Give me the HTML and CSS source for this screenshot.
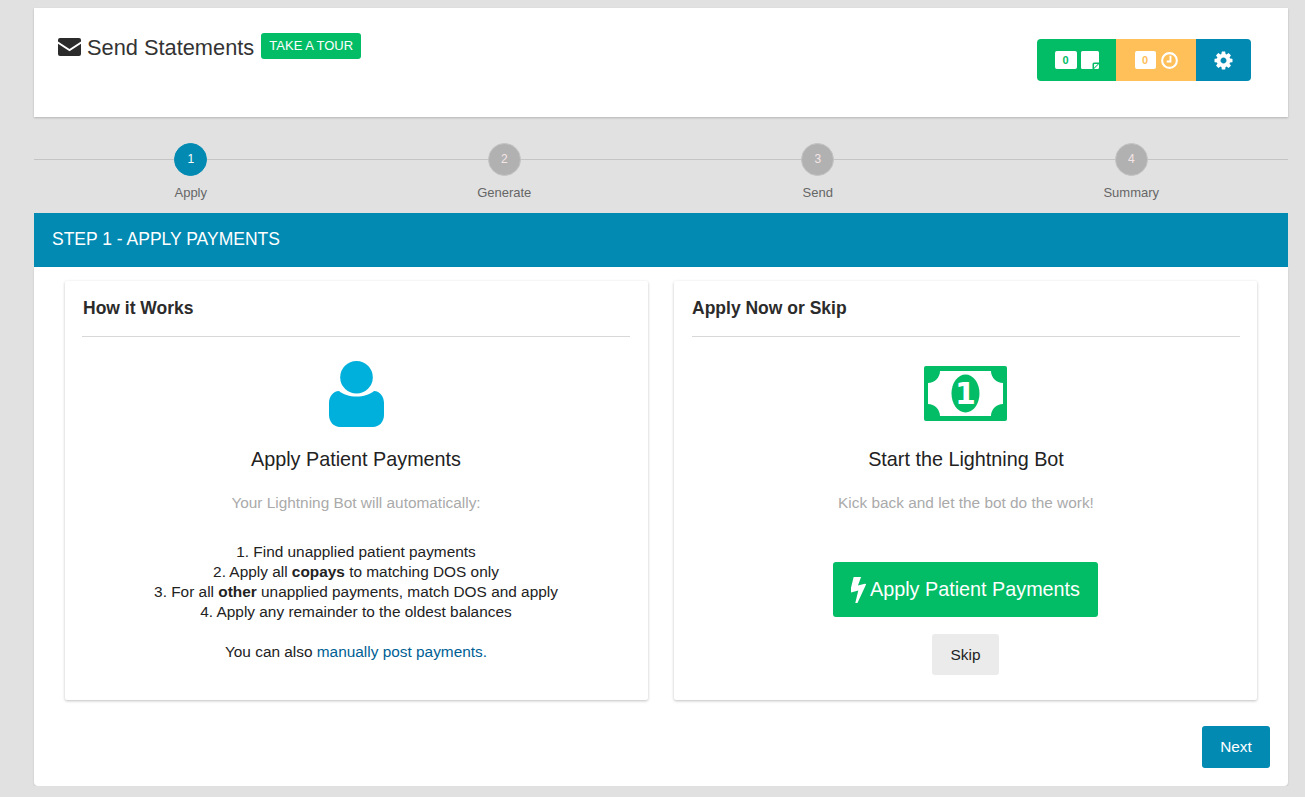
FILE: index.html
```html
<!DOCTYPE html>
<html lang="en">
<head>
    <meta charset="UTF-8">
    <title>Send Statements</title>
    <link rel="stylesheet" href="styles.css">
</head>
<body>

<div class="page">

    <div class="top-card">
        <div class="title-row">
            <svg class="mail-icon" viewBox="0 0 23 18"><path d="M2 0h19a2 2 0 0 1 2 2v1.600l-11.500 7.400L0 3.600V2a2 2 0 0 1 2-2z"/><path d="M0 5.800l11.500 7.400L23 5.800V16a2 2 0 0 1-2 2H2a2 2 0 0 1-2-2z"/></svg>
            <h1>Send Statements</h1>
            <a class="tour-btn">TAKE A TOUR</a>
        </div>
        <div class="actions">
            <div class="action action-green">
                <span class="count count-green">0</span>
                <svg class="note-icon" viewBox="0 0 18 18"><rect width="18" height="18" rx="1.500" fill="#fff"/><path d="M11.500 18v-5a1.500 1.500 0 0 1 1.500-1.500h5v1.500l-5 5z" fill="#02bd66"/><path d="M13 16.800v-3.300a.5.5 0 0 1 .5-.5h3.300z" fill="#fff"/></svg>
            </div>
            <div class="action action-yellow">
                <span class="count count-yellow">0</span>
                <svg class="clock-icon" viewBox="0 0 18 18"><circle cx="9" cy="9" r="7.800" fill="none" stroke="#fff" stroke-width="2.200"/><path d="M10 4v6H6" fill="none" stroke="#fff" stroke-width="2"/></svg>
            </div>
            <div class="action action-blue">
                <svg class="gear-icon" viewBox="0 0 1792 1792"><path fill="#fff" d="M1152 896q0-106-75-181t-181-75-181 75-75 181 75 181 181 75 181-75 75-181zm512-109v222q0 12-8 23t-20 13l-185 28q-19 54-39 91 35 50 107 138 10 12 10 25t-9 23q-27 37-99 108t-94 71q-12 0-26-9l-138-108q-44 23-91 38-16 136-29 186-7 28-36 28h-222q-14 0-24.500-8.500t-11.500-21.500l-28-184q-49-16-90-37l-141 107q-10 9-25 9-14 0-25-11-126-114-165-168-7-10-7-23 0-12 8-23 15-21 51-66.500t54-70.500q-27-50-41-99l-183-27q-13-2-21-12.500t-8-23.500v-222q0-12 8-23t19-13l186-28q14-46 39-92-40-57-107-138-10-12-10-24 0-10 9-23 26-36 98.500-107.500t94.500-71.500q13 0 26 10l138 107q44-23 91-38 16-136 29-186 7-28 36-28h222q14 0 24.500 8.500t11.500 21.500l28 184q49 16 90 37l142-107q9-9 24-9 13 0 25 10 129 119 165 170 7 8 7 22 0 12-8 23-15 21-51 66.500t-54 70.500q26 50 41 98l183 28q13 2 21 12.500t8 23.500z"/></svg>
            </div>
        </div>
    </div>

    <div class="steps">
        <div class="step step-active"><span class="step-num">1</span><span class="step-label">Apply</span></div>
        <div class="step"><span class="step-num">2</span><span class="step-label">Generate</span></div>
        <div class="step"><span class="step-num">3</span><span class="step-label">Send</span></div>
        <div class="step"><span class="step-num">4</span><span class="step-label">Summary</span></div>
    </div>

    <div class="panel">
        <div class="panel-head">STEP 1 - APPLY PAYMENTS</div>
        <div class="panel-body">
            <div class="cards">
                <div class="card">
                    <h3>How it Works</h3>
                    <div class="card-main">
                        <svg class="person-icon" viewBox="0 0 55 66"><circle cx="27.500" cy="16.300" r="16.300"/><path d="M10 30C14 33.500 20.500 35.500 27.500 35.500S41 33.500 45 30C51 30 55 36 55 42V54C55 61 50 66 44 66H11C5 66 0 61 0 54V42C0 36 4 30 10 30z"/></svg>
                        <h4>Apply Patient Payments</h4>
                        <p class="muted">Your Lightning Bot will automatically:</p>
                        <ol class="how-list">
                            <li>1. Find unapplied patient payments</li>
                            <li>2. Apply all <b>copays</b> to matching DOS only</li>
                            <li>3. For all <b>other</b> unapplied payments, match DOS and apply</li>
                            <li>4. Apply any remainder to the oldest balances</li>
                        </ol>
                        <p class="also">You can also <a class="link">manually post payments.</a></p>
                    </div>
                </div>
                <div class="card">
                    <h3>Apply Now or Skip</h3>
                    <div class="card-main">
                        <svg class="bill-icon" viewBox="0 0 83 55"><rect width="83" height="55" rx="2" fill="#02bd66"/><path d="M16 5h51c0 6.500 5.500 12 12 12v21c-6.500 0-12 5.500-12 12H16c0-6.500-5.500-12-12-12V17c6.500 0 12-5.500 12-12z" fill="#fff"/><ellipse cx="41.500" cy="27.500" rx="14" ry="19" fill="#02bd66"/><text x="41.500" y="38" text-anchor="middle" class="bill-one">1</text></svg>
                        <h4>Start the Lightning Bot</h4>
                        <p class="muted">Kick back and let the bot do the work!</p>
                        <a class="apply-btn">
                            <svg class="bolt-icon" viewBox="500 200 900 1400"><path fill="#fff" d="M1333 566q18 20 7 44l-540 1157q-13 25-42 25-4 0-14-2-17-5-25.500-19t-4.500-30l197-808-406 101q-4 1-12 1-18 0-31-11-18-15-13-39l201-825q4-14 16-23t28-9h328q19 0 32 12.500t13 29.500q0 8-5 18l-171 463 396-98q8-2 12-2 19 0 34 15z"/></svg>
                            Apply Patient Payments
                        </a>
                        <a class="skip-btn">Skip</a>
                    </div>
                </div>
            </div>
            <div class="panel-foot">
                <a class="next-btn">Next</a>
            </div>
        </div>
    </div>

</div>

</body>
</html>
```

FILE: styles.css
```css
* {
    box-sizing: border-box;
}

body {
    margin: 0;
    background-color: #e1e1e1;
    font-family: "Liberation Sans", Arial, sans-serif;
    font-size: 14px;
    color: #222;
}

.page {
    width: 1254px;
    margin-left: 34px;
    padding-top: 8px;
}

/* top header */
.top-card {
    height: 109px;
    padding: 25px 37px 0 24px;
    background-color: #fff;
    display: flex;
    justify-content: space-between;
    align-items: flex-start;
    box-shadow: 0 1px 2px rgba(0, 0, 0, 0.2);
}

.title-row {
    display: flex;
    align-items: flex-start;
}

.mail-icon {
    width: 23px;
    height: 18px;
    margin-top: 5px;
    margin-right: 6px;
    fill: #2b2b2b;
}

h1 {
    margin: 0;
    font-size: 21.800px;
    line-height: 29px;
    font-weight: 400;
    color: #333;
}

.tour-btn {
    margin-left: 7px;
    height: 26px;
    width: 100px;
    line-height: 25px;
    text-align: center;
    font-size: 13px;
    color: #fff;
    background-color: #02bd66;
    border-radius: 3px;
}

.actions {
    display: flex;
    margin-top: 6px;
    height: 42px;
    border-radius: 4px;
    overflow: hidden;
}

.action {
    display: flex;
    align-items: center;
    justify-content: center;
}

.action-green {
    width: 79px;
    background-color: #02bd66;
}

.action-yellow {
    width: 80px;
    background-color: #ffc05a;
}

.action-blue {
    width: 55px;
    background-color: #028ab3;
}

.count {
    width: 22px;
    height: 18px;
    margin-right: 4px;
    background-color: #fff;
    border-radius: 2px;
    text-align: center;
    font-size: 11px;
    font-weight: 700;
    line-height: 18px;
}

.count-green {
    color: #02bd66;
}

.count-yellow {
    width: 21px;
    margin-right: 5px;
    color: #ffc05a;
}

.note-icon {
    width: 18px;
    height: 18px;
}

.clock-icon {
    width: 17px;
    height: 17px;
}

.gear-icon {
    width: 21px;
    height: 21px;
}

/* wizard steps */
.steps {
    display: flex;
    height: 96px;
    background: linear-gradient(#c4c4c4, #c4c4c4) no-repeat 0 42px / 100% 1px;
}

.step {
    flex: 1;
    display: flex;
    flex-direction: column;
    align-items: center;
    padding-top: 26px;
}

.step-num {
    width: 33px;
    height: 33px;
    border-radius: 50%;
    background-color: #b1b1b1;
    border: 1px solid #c4c4c4;
    color: #f5e6e6;
    font-size: 12px;
    line-height: 31px;
    text-align: center;
}

.step-active .step-num {
    background-color: #028ab3;
    border-color: #028ab3;
    color: #fff;
}

.step-label {
    margin-top: 9px;
    font-size: 13px;
    line-height: 15px;
    color: #666;
}

/* main panel */
.panel-head {
    height: 54px;
    padding-left: 18px;
    background-color: #028ab3;
    color: #fff;
    font-size: 17.500px;
    line-height: 52px;
}

.panel-body {
    height: 519px;
    padding: 14px 18px 0 31px;
    background-color: #fff;
    border-radius: 0 0 4px 4px;
    box-shadow: 0 1px 2px rgba(0, 0, 0, 0.15);
}

.cards {
    display: flex;
    gap: 26px;
    padding-right: 13px;
}

.card {
    width: 583px;
    height: 419px;
    padding: 0 18px 0 17px;
    background-color: #fff;
    box-shadow: 0 1px 3px rgba(0, 0, 0, 0.25);
    border-radius: 2px;
}

.card + .card {
    padding: 0 17px 0 18px;
}

h3 {
    margin: 0;
    height: 56px;
    font-size: 17.500px;
    line-height: 54px;
    font-weight: 700;
    color: #2b2b2b;
    border-bottom: 1px solid #d8d8d8;
    padding-left: 1px;
}

.card + .card h3 {
    padding-left: 0;
}

.card-main {
    display: flex;
    flex-direction: column;
    align-items: center;
    text-align: center;
}

.person-icon {
    width: 55px;
    height: 66px;
    margin-top: 24px;
    margin-bottom: 1px;
    fill: #00b0dc;
}

.bill-icon {
    width: 83px;
    height: 55px;
    margin-top: 29px;
    margin-bottom: 7px;
    margin-right: 1px;
}

.bill-one {
    font-family: "DejaVu Sans", sans-serif;
    font-size: 30px;
    font-weight: 700;
    fill: #fff;
}

h4 {
    margin: 19px 0 0;
    font-size: 19.800px;
    line-height: 24px;
    font-weight: 400;
    color: #222;
}

.muted {
    margin: 22px 0 0;
    font-size: 15.400px;
    line-height: 20px;
    color: #aaa;
}

.how-list {
    list-style: none;
    margin: 29px 0 0;
    padding: 0;
    font-size: 15.400px;
    line-height: 20px;
    color: #222;
}

.also {
    margin: 20px 0 0;
    font-size: 15.400px;
    line-height: 20px;
    color: #222;
}

.link {
    color: #005f95;
}

.apply-btn {
    display: flex;
    align-items: center;
    justify-content: center;
    width: 265px;
    height: 55px;
    margin-top: 49px;
    margin-right: 1px;
    background-color: #02bd66;
    border-radius: 3px;
    color: #fff;
    font-size: 19.800px;
}

.bolt-icon {
    width: 16px;
    height: 26px;
    margin-right: 3px;
}

.skip-btn {
    width: 67px;
    height: 41px;
    margin-top: 17px;
    margin-right: 1px;
    background-color: #ebebeb;
    border-radius: 3px;
    font-size: 15.400px;
    line-height: 41px;
    color: #222;
}

.panel-foot {
    display: flex;
    justify-content: flex-end;
    margin-top: 26px;
}

.next-btn {
    width: 68px;
    height: 42px;
    background-color: #028ab3;
    border-radius: 3px;
    color: #fff;
    font-size: 15.400px;
    line-height: 41px;
    text-align: center;
}
```
